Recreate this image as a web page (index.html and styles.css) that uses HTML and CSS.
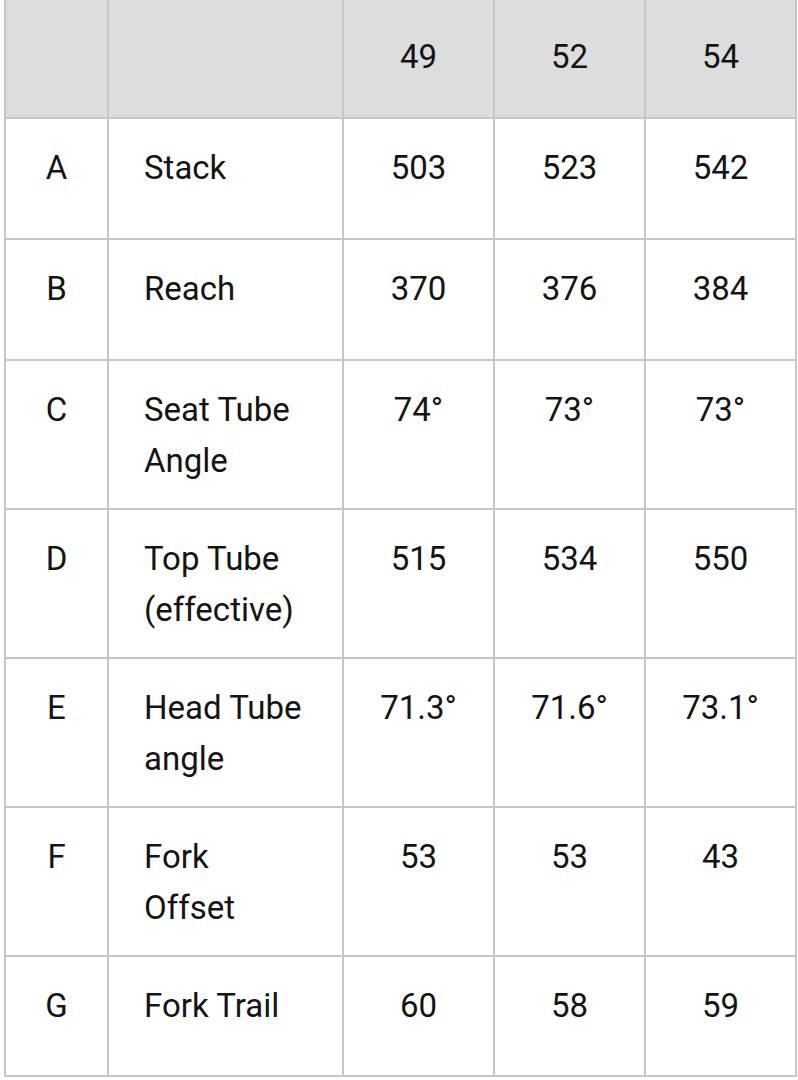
FILE: index.html
```html
<!DOCTYPE html>
<html lang="en">
<head>
<meta charset="utf-8">
<title>Geometry</title>
<link rel="stylesheet" href="styles.css">
</head>
<body>
<table class="geo">
  <colgroup>
    <col class="c-key">
    <col class="c-name">
    <col class="c-val">
    <col class="c-val">
    <col class="c-val">
  </colgroup>
  <thead>
    <tr>
      <th></th>
      <th></th>
      <th>49</th>
      <th>52</th>
      <th>54</th>
    </tr>
  </thead>
  <tbody>
    <tr><td class="key">A</td><td class="name">Stack</td><td>503</td><td>523</td><td>542</td></tr>
    <tr><td class="key">B</td><td class="name">Reach</td><td>370</td><td>376</td><td>384</td></tr>
    <tr class="two"><td class="key">C</td><td class="name">Seat Tube<br>Angle</td><td>74°</td><td>73°</td><td>73°</td></tr>
    <tr class="two"><td class="key">D</td><td class="name">Top Tube<br>(effective)</td><td>515</td><td>534</td><td>550</td></tr>
    <tr class="two"><td class="key">E</td><td class="name">Head Tube<br>angle</td><td>71.3°</td><td>71.6°</td><td>73.1°</td></tr>
    <tr class="two"><td class="key">F</td><td class="name">Fork<br>Offset</td><td>53</td><td>53</td><td>43</td></tr>
    <tr class="last"><td class="key">G</td><td class="name">Fork Trail</td><td>60</td><td>58</td><td>59</td></tr>
  </tbody>
</table>
</body>
</html>
```
FILE: styles.css
```css
html, body {
  margin: 0;
  padding: 0;
  background: #ffffff;
}

body {
  font-family: Roboto, "Liberation Sans", sans-serif;
  color: #141414;
}

.geo {
  margin-left: 4px;
  width: 792px;
  border-collapse: collapse;
  table-layout: fixed;
  font-size: 33px;
  line-height: 51px;
}

.c-key { width: 103px; }
.c-name { width: 235px; }
.c-val { width: 151px; }

.geo th,
.geo td {
  border: 2px solid #c6c6c6;
  text-align: center;
  vertical-align: top;
  padding: 23px 0 23px 0;
  font-weight: 400;
}

.geo thead th {
  background: #dddddd;
  border-top: none;
  height: 118px;
  padding: 31px 0 0 0;
  box-sizing: border-box;
}

.geo tbody tr {
  height: 121px;
}

.geo tbody tr.two td {
  padding-bottom: 22px;
}

.geo tbody tr.last {
  height: 120px;
}

.geo td.name {
  text-align: left;
  padding-left: 35px;
}
```
